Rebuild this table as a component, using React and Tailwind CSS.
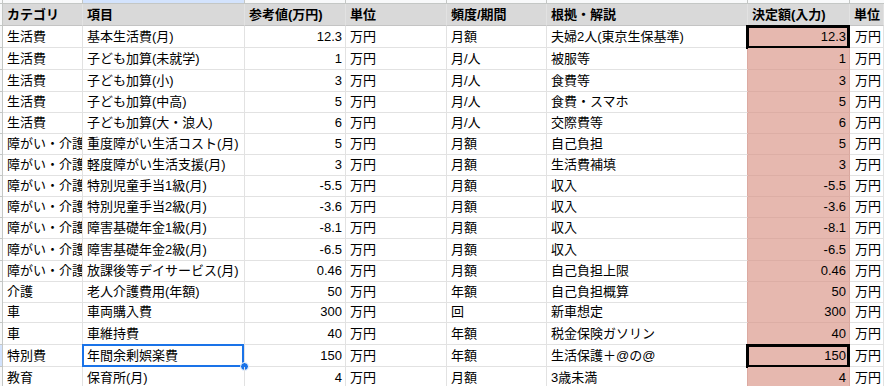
const cols = 'grid grid-cols-[3px_80px_162px_101px_101px_100px_201px_102px_1fr]'

const rows = [
  { h: 'h-[22px]', cat: '生活費', item: '基本生活費(月)', ref: '12.3', freq: '月額', note: '夫婦2人(東京生保基準)', val: '12.3', boxed: true },
  { h: 'h-[22px]', cat: '生活費', item: '子ども加算(未就学)', ref: '1', freq: '月/人', note: '被服等', val: '1' },
  { h: 'h-[22px]', cat: '生活費', item: '子ども加算(小)', ref: '3', freq: '月/人', note: '食費等', val: '3' },
  { h: 'h-[21px]', cat: '生活費', item: '子ども加算(中高)', ref: '5', freq: '月/人', note: '食費・スマホ', val: '5' },
  { h: 'h-[21px]', cat: '生活費', item: '子ども加算(大・浪人)', ref: '6', freq: '月/人', note: '交際費等', val: '6' },
  { h: 'h-[21px]', cat: '障がい・介護', item: '重度障がい生活コスト(月)', ref: '5', freq: '月額', note: '自己負担', val: '5' },
  { h: 'h-[21px]', cat: '障がい・介護', item: '軽度障がい生活支援(月)', ref: '3', freq: '月額', note: '生活費補填', val: '3' },
  { h: 'h-[21px]', cat: '障がい・介護', item: '特別児童手当1級(月)', ref: '-5.5', freq: '月額', note: '収入', val: '-5.5' },
  { h: 'h-[21px]', cat: '障がい・介護', item: '特別児童手当2級(月)', ref: '-3.6', freq: '月額', note: '収入', val: '-3.6' },
  { h: 'h-[21px]', cat: '障がい・介護', item: '障害基礎年金1級(月)', ref: '-8.1', freq: '月額', note: '収入', val: '-8.1' },
  { h: 'h-[22px]', cat: '障がい・介護', item: '障害基礎年金2級(月)', ref: '-6.5', freq: '月額', note: '収入', val: '-6.5' },
  { h: 'h-[21px]', cat: '障がい・介護', item: '放課後等デイサービス(月)', ref: '0.46', freq: '月額', note: '自己負担上限', val: '0.46' },
  { h: 'h-[20px]', cat: '介護', item: '老人介護費用(年額)', ref: '50', freq: '年額', note: '自己負担概算', val: '50' },
  { h: 'h-[21px]', cat: '車', item: '車両購入費', ref: '300', freq: '回', note: '新車想定', val: '300' },
  { h: 'h-[22px]', cat: '車', item: '車維持費', ref: '40', freq: '年額', note: '税金保険ガソリン', val: '40' },
  { h: 'h-[22px]', cat: '特別費', item: '年間余剰娯楽費', ref: '150', freq: '年額', note: '生活保護＋@の@', val: '150', boxed: true, selected: true },
  { h: 'h-[22px]', cat: '教育', item: '保育所(月)', ref: '4', freq: '月額', note: '3歳未満', val: '4' },
]

const cell = 'flex items-center overflow-hidden whitespace-nowrap border-r border-b border-[#e2e2e2] px-[4px]'

function Row({ r }) {
  return (
    <div className={`${cols} ${r.h}`}>
      <div className={`border-r border-b border-[#c4c7c5] ${r.selected ? 'bg-[#d3e3fd]' : 'bg-[#f8f9fa]'}`} />
      <div className={cell}>{r.cat}</div>
      <div className={`${cell} relative overflow-visible`}>
        {r.item}
        {r.selected && (
          <>
            <div className="pointer-events-none absolute -top-[1px] -left-[1px] -right-[0px] -bottom-[1px] border-2 border-[#1a73e8]" />
            <div className="absolute -right-[5px] -bottom-[5px] h-[9px] w-[9px] rounded-full border border-white bg-[#1a73e8]" />
          </>
        )}
      </div>
      <div className={`${cell} justify-end pr-[3px]`}>{r.ref}</div>
      <div className={cell}>万円</div>
      <div className={cell}>{r.freq}</div>
      <div className={`${cell} border-r-[#dcaaa1]`}>{r.note}</div>
      <div className={`${cell} relative justify-end overflow-visible bg-[#e6b8af] border-b-[#dcaea5] border-r-[#d9a79e] pr-[3px]`}>
        {r.val}
        {r.boxed && (
          <div className="pointer-events-none absolute -top-[1px] -left-[2px] -right-[1px] -bottom-[2px] border-[3px] border-black" />
        )}
      </div>
      <div className={`${cell} pl-[5px]`}>万円</div>
    </div>
  )
}

export default function App() {
  return (
    <div className="h-[386px] w-[884px] overflow-hidden bg-white font-['Liberation_Sans','Noto_Sans_CJK_JP',sans-serif] text-[13px] text-black">
      <div className={`${cols} h-[4px]`}>
        <div className="border-r border-b border-[#c4c7c5] bg-[#f8f9fa]" />
        <div className="border-r border-b border-[#c4c7c5] bg-[#f8f9fa]" />
        <div className="border-r border-b border-[#c4c7c5] bg-[#d3e3fd]" />
        <div className="border-r border-b border-[#c4c7c5] bg-[#f8f9fa]" />
        <div className="border-r border-b border-[#c4c7c5] bg-[#f8f9fa]" />
        <div className="border-r border-b border-[#c4c7c5] bg-[#f8f9fa]" />
        <div className="border-r border-b border-[#c4c7c5] bg-[#f8f9fa]" />
        <div className="border-r border-b border-[#c4c7c5] bg-[#f8f9fa]" />
        <div className="border-b border-[#c4c7c5] bg-[#f8f9fa]" />
      </div>
      <div className={`${cols} h-[22px] font-bold`}>
        <div className="border-r border-b border-[#c4c7c5] bg-[#f8f9fa]" />
        <div className={`${cell} bg-[#d9d9d9] border-b-[#c4c4c4]`}>カテゴリ</div>
        <div className={`${cell} bg-[#d9d9d9] border-b-[#c4c4c4]`}>項目</div>
        <div className={`${cell} bg-[#d9d9d9] border-b-[#c4c4c4]`}>参考値(万円)</div>
        <div className={`${cell} bg-[#d9d9d9] border-b-[#c4c4c4]`}>単位</div>
        <div className={`${cell} bg-[#d9d9d9] border-b-[#c4c4c4]`}>頻度/期間</div>
        <div className={`${cell} bg-[#d9d9d9] border-b-[#c4c4c4]`}>根拠・解説</div>
        <div className={`${cell} bg-[#d9d9d9] border-b-[#c4c4c4]`}>決定額(入力)</div>
        <div className={`${cell} bg-[#d9d9d9] border-b-[#c4c4c4]`}>単位</div>
      </div>
      {rows.map((r, i) => (
        <Row key={i} r={r} />
      ))}
    </div>
  )
}
